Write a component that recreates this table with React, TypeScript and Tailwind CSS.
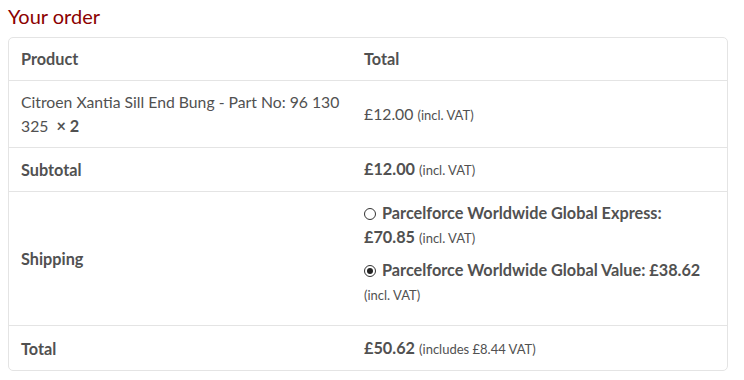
const rows = "border-t border-[#e4e4e4]";
const th = "px-3 py-[9px] text-[16.25px] font-bold";
const b = "text-[16.25px] font-bold";

function Radio({ checked }: { checked?: boolean }) {
  return (
    <span className="relative mr-[6px] inline-block h-[12px] w-[12px] translate-y-[1px] rounded-full border border-[#333] bg-white align-baseline">
      {checked && <span className="absolute left-[2px] top-[2px] h-[6px] w-[6px] rounded-full bg-[#222]" />}
    </span>
  );
}

export default function App() {
  return (
    <div className="bg-white px-2 pt-[3px] font-['Lato',sans-serif] text-[15.75px] text-[#515151]">
      <h3 className="mb-[8px] text-[20px] leading-[26px] text-[#8b0000]">Your order</h3>
      <div className="w-[720px] rounded-[5px] border border-[#e4e4e4]">
        <table className="w-full border-collapse text-left leading-[24px]">
          <thead>
            <tr>
              <th className={`w-[343px] ${th}`}>Product</th>
              <th className={th}>Total</th>
            </tr>
          </thead>
          <tbody>
            <tr className={rows}>
              <td className="px-3 py-[9px] align-middle">
                Citroen Xantia Sill End Bung - Part No: 96 130 325&nbsp; <strong className={b}>×&nbsp;2</strong>
              </td>
              <td className="px-3 py-[9px]">
                £12.00 <small className="text-[13px]">(incl. VAT)</small>
              </td>
            </tr>
          </tbody>
          <tfoot>
            <tr className={rows}>
              <th className={th}>Subtotal</th>
              <td className="px-3 py-[9px]">
                <strong className={b}>£12.00</strong> <small className="text-[13px]">(incl. VAT)</small>
              </td>
            </tr>
            <tr className={rows}>
              <th className={th}>Shipping</th>
              <td className="px-3 pb-[9px] pt-[9px]">
                <ul className="flex flex-col gap-2">
                  <li>
                    <Radio />
                    <strong className={b}>Parcelforce Worldwide Global Express: £70.85</strong>{" "}
                    <small className="text-[13px]">(incl. VAT)</small>
                  </li>
                  <li className="pb-[9px]">
                    <Radio checked />
                    <strong className={b}>Parcelforce Worldwide Global Value: £38.62</strong>{" "}
                    <small className="text-[13px]">(incl. VAT)</small>
                  </li>
                </ul>
              </td>
            </tr>
            <tr className={rows}>
              <th className="px-3 pb-[9px] pt-[10px] text-[16.25px] font-bold">Total</th>
              <td className="px-3 pb-[9px] pt-[10px]">
                <strong className={b}>£50.62</strong> <small className="text-[13px]">(includes £8.44 VAT)</small>
              </td>
            </tr>
          </tfoot>
        </table>
      </div>
    </div>
  );
}
